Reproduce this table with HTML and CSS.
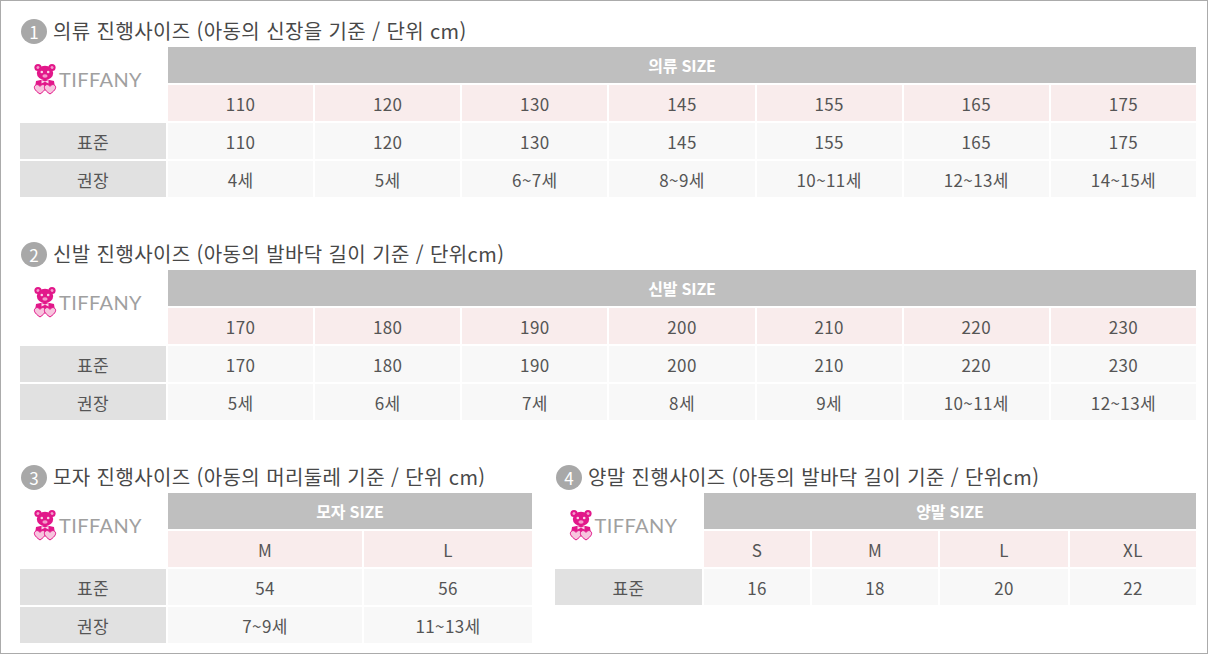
FILE: index.html
```html
<!DOCTYPE html>
<html lang="ko">
<head>
<meta charset="utf-8">
<title>진행사이즈</title>
<link rel="stylesheet" href="styles.css">
</head>
<body>
<svg width="0" height="0" class="defs" aria-hidden="true">
  <defs>
    <symbol id="bear" viewBox="0 0 24 32">
      <circle cx="5" cy="4.5" r="3.6" fill="#e2178a"/>
      <circle cx="19" cy="4.5" r="3.6" fill="#e2178a"/>
      <circle cx="5" cy="4.5" r="1.5" fill="#f49ccb"/>
      <circle cx="19" cy="4.5" r="1.5" fill="#f49ccb"/>
      <ellipse cx="12" cy="10" rx="8.2" ry="7.2" fill="#e2178a"/>
      <circle cx="8.8" cy="9" r="1.3" fill="#fbd3e8"/>
      <circle cx="15.2" cy="9" r="1.3" fill="#fbd3e8"/>
      <ellipse cx="12" cy="13" rx="2.6" ry="1.8" fill="#f49ccb"/>
      <path d="M3 18 Q12 15 21 18 L22 25 L2 25 Z" fill="#e2178a"/>
      <path d="M8.5 17 L12 18.6 L15.5 17 L15.5 20.4 L12 18.8 L8.5 20.4 Z" fill="#fbd3e8"/>
      <path d="M7 31 C1 27 0.5 24 2.2 22.4 C4 20.8 6 21.6 7 23.4 C8 21.6 10 20.8 11.8 22.4 C13.5 24 13 27 7 31 Z" fill="#f7c5de" stroke="#e2178a" stroke-width="1"/>
      <path d="M17 31 C11 27 10.5 24 12.2 22.4 C14 20.8 16 21.6 17 23.4 C18 21.6 20 20.8 21.8 22.4 C23.5 24 23 27 17 31 Z" fill="#f7c5de" stroke="#e2178a" stroke-width="1"/>
    </symbol>
  </defs>
</svg>
<div class="page">
  <section class="section">
    <h2 class="title"><span class="num">1</span>의류 진행사이즈 (아동의 신장을 기준 / 단위 cm)</h2>
    <div class="grid grid-7">
      <div class="logo"><svg class="bear"><use href="#bear"/></svg><span class="brand">TIFFANY</span></div>
      <div class="head span-7">의류 SIZE</div>
      <div class="size">110</div><div class="size">120</div><div class="size">130</div><div class="size">145</div><div class="size">155</div><div class="size">165</div><div class="size">175</div>
      <div class="label">표준</div>
      <div class="cell">110</div><div class="cell">120</div><div class="cell">130</div><div class="cell">145</div><div class="cell">155</div><div class="cell">165</div><div class="cell">175</div>
      <div class="label">권장</div>
      <div class="cell">4세</div><div class="cell">5세</div><div class="cell">6~7세</div><div class="cell">8~9세</div><div class="cell">10~11세</div><div class="cell">12~13세</div><div class="cell">14~15세</div>
    </div>
  </section>
  <section class="section">
    <h2 class="title"><span class="num">2</span>신발 진행사이즈 (아동의 발바닥 길이 기준 / 단위cm)</h2>
    <div class="grid grid-7">
      <div class="logo"><svg class="bear"><use href="#bear"/></svg><span class="brand">TIFFANY</span></div>
      <div class="head span-7">신발 SIZE</div>
      <div class="size">170</div><div class="size">180</div><div class="size">190</div><div class="size">200</div><div class="size">210</div><div class="size">220</div><div class="size">230</div>
      <div class="label">표준</div>
      <div class="cell">170</div><div class="cell">180</div><div class="cell">190</div><div class="cell">200</div><div class="cell">210</div><div class="cell">220</div><div class="cell">230</div>
      <div class="label">권장</div>
      <div class="cell">5세</div><div class="cell">6세</div><div class="cell">7세</div><div class="cell">8세</div><div class="cell">9세</div><div class="cell">10~11세</div><div class="cell">12~13세</div>
    </div>
  </section>
  <div class="bottom">
    <section class="section">
      <h2 class="title"><span class="num">3</span>모자 진행사이즈 (아동의 머리둘레 기준 / 단위 cm)</h2>
      <div class="grid grid-hat">
        <div class="logo"><svg class="bear"><use href="#bear"/></svg><span class="brand">TIFFANY</span></div>
        <div class="head span-2">모자 SIZE</div>
        <div class="size">M</div><div class="size">L</div>
        <div class="label">표준</div>
        <div class="cell">54</div><div class="cell">56</div>
        <div class="label">권장</div>
        <div class="cell">7~9세</div><div class="cell">11~13세</div>
      </div>
    </section>
    <section class="section">
      <h2 class="title"><span class="num">4</span>양말 진행사이즈 (아동의 발바닥 길이 기준 / 단위cm)</h2>
      <div class="grid grid-sock">
        <div class="logo"><svg class="bear"><use href="#bear"/></svg><span class="brand">TIFFANY</span></div>
        <div class="head span-4">양말 SIZE</div>
        <div class="size">S</div><div class="size">M</div><div class="size">L</div><div class="size">XL</div>
        <div class="label">표준</div>
        <div class="cell">16</div><div class="cell">18</div><div class="cell">20</div><div class="cell">22</div>
      </div>
    </section>
  </div>
</div>
</body>
</html>
```
FILE: styles.css
```css
html, body {
  margin: 0;
  padding: 0;
  background: #ffffff;
}
.defs {
  position: absolute;
  width: 0;
  height: 0;
  overflow: hidden;
}
.page {
  box-sizing: border-box;
  width: 1208px;
  height: 654px;
  border: 1px solid #ababab;
  padding: 18px 11px 0 19px;
  font-family: "Noto Sans CJK KR", "Noto Sans", sans-serif;
  color: #555555;
}
.section + .section {
  margin-top: 45px;
}
.title {
  display: flex;
  align-items: center;
  gap: 6px;
  height: 24px;
  margin: 0 0 4px 1px;
  font-size: 20px;
  font-weight: 400;
  line-height: 24px;
  color: #484848;
  letter-spacing: 0.4px;
}
.num {
  display: flex;
  align-items: center;
  justify-content: center;
  width: 26px;
  height: 25px;
  border-radius: 50%;
  background: #a8a8a8;
  color: #ffffff;
  font-size: 17px;
  line-height: 1;
  letter-spacing: 0;
}
.grid {
  display: grid;
  grid-auto-rows: 36px;
  gap: 2px;
}
.grid-7 {
  grid-template-columns: 146px repeat(7, 1fr);
}
.grid-hat {
  grid-template-columns: 146px 194px 1fr;
}
.grid-sock {
  grid-template-columns: 147px 106px 126px 128px 1fr;
}
.span-7 { grid-column: span 7; }
.span-4 { grid-column: span 4; }
.span-2 { grid-column: span 2; }
.logo {
  grid-row: span 2;
  display: flex;
  align-items: flex-start;
  justify-content: center;
  gap: 2px;
  padding: 16px 11px 0 0;
  background: #ffffff;
}
.bear {
  width: 24px;
  height: 32px;
  flex: none;
}
.brand {
  font-family: "Lato", "Liberation Sans", sans-serif;
  font-size: 20px;
  line-height: 32px;
  color: #a0a0a0;
  letter-spacing: 0.4px;
}
.head {
  display: flex;
  align-items: center;
  justify-content: center;
  background: #bfbfbf;
  color: #ffffff;
  font-size: 16px;
  font-weight: 700;
  letter-spacing: -0.2px;
}
.size, .cell, .label {
  display: flex;
  align-items: center;
  justify-content: center;
  font-size: 17px;
  line-height: 1;
  letter-spacing: 0.4px;
  color: #555555;
}
.size {
  background: #f9ecec;
}
.cell {
  background: #f8f8f8;
}
.label {
  background: #e1e1e1;
}
.bottom {
  display: grid;
  grid-template-columns: 512px 1fr;
  column-gap: 23px;
  margin-top: 45px;
}
.bottom .section + .section {
  margin-top: 0;
}
```
